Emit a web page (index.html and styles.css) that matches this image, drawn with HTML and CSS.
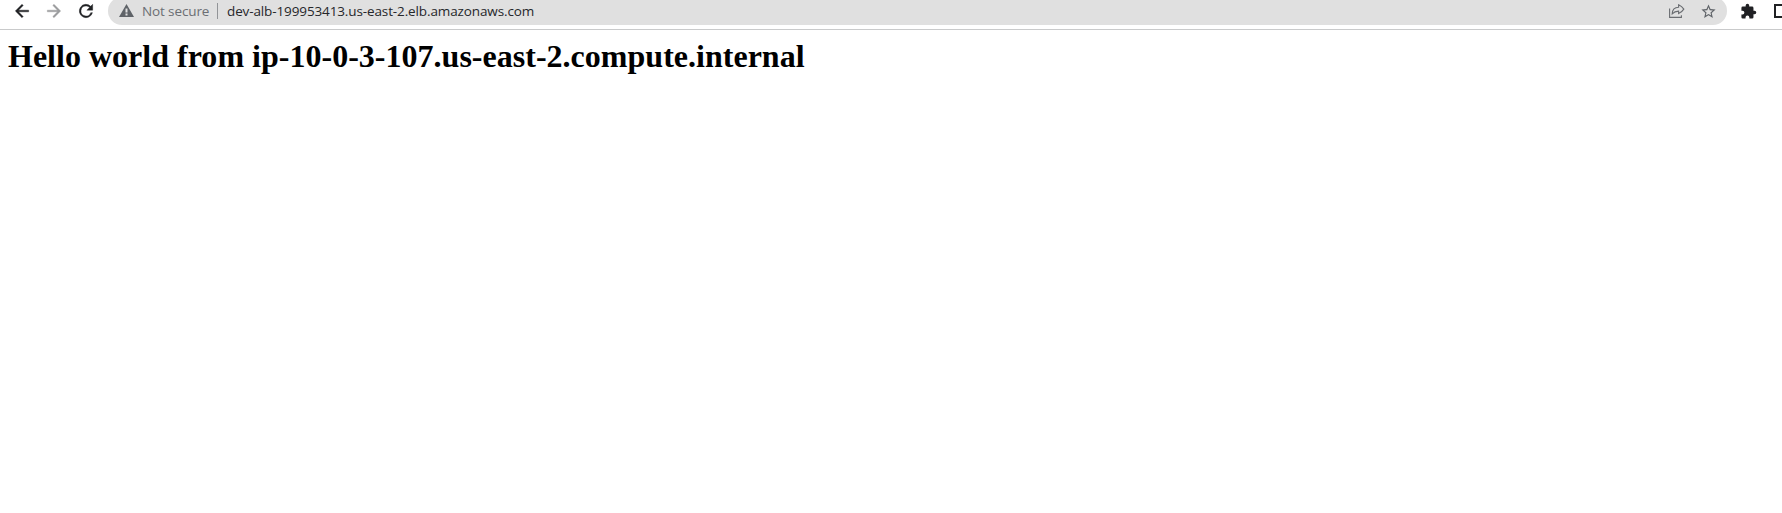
FILE: index.html
```html
<!DOCTYPE html>
<html lang="en">
<head>
<meta charset="utf-8">
<title>dev-alb</title>
<link rel="stylesheet" href="styles.css">
</head>
<body>
<header class="toolbar">
  <nav class="nav">
    <svg class="icon" viewBox="0 0 24 24"><path d="M20 11H7.83l5.59-5.59L12 4l-8 8 8 8 1.41-1.41L7.83 13H20z"/></svg>
    <svg class="icon icon-muted" viewBox="0 0 24 24"><path d="M12 4l-1.41 1.41L16.17 11H4v2h12.17l-5.58 5.59L12 20l8-8z"/></svg>
    <svg class="icon" viewBox="0 0 24 24"><path d="M17.65 6.35A8 8 0 1 0 19.73 14h-2.08A6 6 0 1 1 12 6c1.66 0 3.14.69 4.22 1.78L13 11h7V4z"/></svg>
  </nav>
  <div class="omnibox">
    <svg class="warning" viewBox="0 0 15 13"><path fill-rule="evenodd" d="M7.5 0L15 13H0zM6.500 4.500v4h2v-4zM6.500 9.500v2h2v-2z"/></svg>
    <span class="status">Not secure</span>
    <span class="divider"></span>
    <span class="url">dev-alb-199953413.us-east-2.elb.amazonaws.com</span>
    <span class="actions">
      <svg class="share" viewBox="0 0 16 14"><path d="M.6 4.500v8.900h11.800v-2.200M3.200 9.800C3.400 5.400 5.600 3.400 9.600 3.300V.8q3.400 1.600 5.200 4.300-1.800 2.900-5.200 4.500V7.100C6.900 7.100 4.900 7.900 3.200 9.800z"/></svg>
      <svg class="star" viewBox="0 0 24 24"><path d="M22 9.240l-7.190-.62L12 2 9.190 8.630 2 9.240l5.460 4.730L5.820 21 12 17.270 18.180 21l-1.630-7.030zM12 15.400l-3.760 2.270 1-4.280-3.320-2.880 4.380-.38L12 6.100l1.710 4.040 4.380.38-3.320 2.880 1 4.280z"/></svg>
    </span>
  </div>
  <div class="extras">
    <svg class="puzzle" viewBox="0 0 24 24"><path d="M20.500 11H19V7a2 2 0 0 0-2-2h-4V3.500a2.500 2.500 0 0 0-5 0V5H4a2 2 0 0 0-1.990 2v3.800H3.500a2.700 2.700 0 0 1 0 5.400H2V20a2 2 0 0 0 2 2h3.800v-1.500a2.700 2.700 0 0 1 5.400 0V22H17a2 2 0 0 0 2-2v-4h1.500a2.500 2.500 0 0 0 0-5z"/></svg>
    <span class="panel"></span>
  </div>
</header>
<main class="page">
  <h1 class="title">Hello world from ip-10-0-3-107.us-east-2.compute.internal</h1>
</main>
</body>
</html>
```
FILE: styles.css
```css
body {
  margin: 0;
  background: #fff;
  color: #000;
  overflow: hidden;
}

.toolbar {
  display: flex;
  box-sizing: border-box;
  height: 30px;
  padding-left: 12px;
  border-bottom: 1px solid #c9cacb;
  overflow: hidden;
  font-family: "Open Sans", "Noto Sans", sans-serif;
  font-size: 13.5px;
  letter-spacing: -0.12px;
}

.nav {
  display: flex;
  flex: none;
  align-items: center;
  gap: 12px;
  width: 96px;
  height: 22px;
}

.icon {
  width: 20px;
  height: 20px;
  flex: none;
  fill: #202124;
  stroke: #202124;
  stroke-width: 0.5;
}

.icon-muted {
  fill: #9b9c9e;
  stroke: #9b9c9e;
}

.omnibox {
  display: flex;
  align-items: center;
  box-sizing: border-box;
  width: 1619px;
  height: 28px;
  margin-top: -3px;
  padding: 0 10px 0 11px;
  border-radius: 14px;
  background: #e0e0e0;
  flex: none;
}

.warning {
  width: 15px;
  height: 13px;
  margin-top: -1px;
  fill: #5f6368;
}

.status {
  width: 67px;
  margin-left: 8px;
  color: #6b6e73;
  white-space: nowrap;
}

.divider {
  width: 1px;
  height: 16px;
  margin: 0 9px 0 8px;
  background: #929497;
}

.url {
  color: #26272a;
  white-space: nowrap;
}

.actions {
  display: flex;
  align-items: center;
  gap: 15px;
  margin-left: auto;
}

.share {
  width: 16px;
  height: 14px;
  fill: none;
  stroke: #6a6d71;
  stroke-width: 1.1;
}

.star {
  width: 17px;
  height: 17px;
  fill: #5f6368;
}

.extras {
  display: flex;
  align-items: center;
  gap: 17px;
  height: 22px;
  margin-left: 13px;
  flex: none;
}

.puzzle {
  width: 17px;
  height: 17px;
  fill: #202124;
}

.panel {
  box-sizing: border-box;
  width: 18px;
  height: 14px;
  border: 2px solid #202124;
}

.page {
  padding: 8px;
}

.title {
  margin: 0;
  font: bold 32px "Liberation Serif", "Times New Roman", serif;
  letter-spacing: 0.015px;
}
```
